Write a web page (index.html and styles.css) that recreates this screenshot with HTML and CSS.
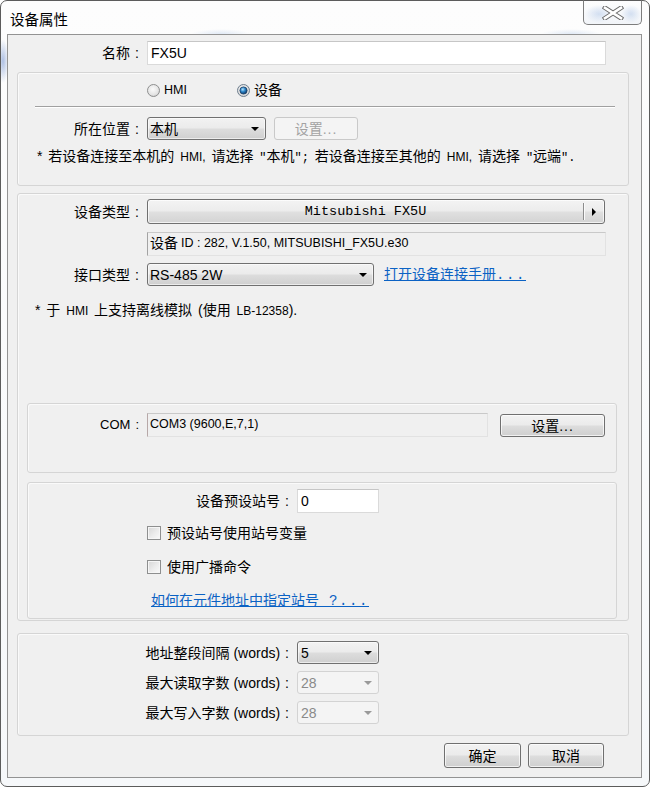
FILE: index.html
```html
<!DOCTYPE html>
<html>
<head>
<meta charset="utf-8">
<title>设备属性</title>
<link rel="stylesheet" href="styles.css">
</head>
<body>
<div class="window">
  <div class="titlebar">
    <span class="title">设备属性</span>
    <div class="close">
      <svg width="22" height="14" viewBox="0 0 22 14">
        <path d="M3 1.8 L19 12.2 M19 1.8 L3 12.2" stroke="#6b6b6b" stroke-width="4.6" stroke-linecap="square" fill="none"/>
        <path d="M3 1.8 L19 12.2 M19 1.8 L3 12.2" stroke="#ffffff" stroke-width="2.6" stroke-linecap="square" fill="none"/>
      </svg>
    </div>
  </div>

  <div class="content">
    <div class="row name-row">
      <div class="lbl lw-139">名称<span class="colon">:</span></div>
      <div class="edit name-edit">FX5U</div>
    </div>

    <div class="group g1">
      <div class="radios">
        <span class="radio">
          <svg width="13" height="13" viewBox="0 0 13 13">
            <defs>
              <radialGradient id="ru" cx="45%" cy="40%" r="65%">
                <stop offset="0" stop-color="#fbfbfb"/>
                <stop offset="0.7" stop-color="#e4e4e4"/>
                <stop offset="1" stop-color="#c6c6c6"/>
              </radialGradient>
            </defs>
            <circle cx="6.5" cy="6.5" r="6" fill="url(#ru)" stroke="#8e8f8f"/>
          </svg>
          <span class="rtext rsm">HMI</span>
        </span>
        <span class="radio r2">
          <svg width="13" height="13" viewBox="0 0 13 13">
            <defs>
              <radialGradient id="rs" cx="45%" cy="40%" r="65%">
                <stop offset="0" stop-color="#fbfbfb"/>
                <stop offset="1" stop-color="#cfcfcf"/>
              </radialGradient>
              <radialGradient id="rd" cx="40%" cy="35%" r="70%">
                <stop offset="0" stop-color="#b8e6ff"/>
                <stop offset="0.45" stop-color="#2c86c9"/>
                <stop offset="1" stop-color="#0b2f5e"/>
              </radialGradient>
            </defs>
            <circle cx="6.5" cy="6.5" r="6" fill="url(#rs)" stroke="#6f7f8f"/>
            <circle cx="6.5" cy="6.5" r="3.6" fill="url(#rd)" stroke="#1b3f66" stroke-width="0.8"/>
          </svg>
          <span class="rtext">设备</span>
        </span>
      </div>
      <div class="sep"></div>
      <div class="row loc-row">
        <div class="lbl lw-129">所在位置<span class="colon">:</span></div>
        <div class="combo loc-combo"><span class="ctext">本机</span><i class="arrow"></i></div>
        <div class="btn disabled loc-btn">设置<span class="bdots">...</span></div>
      </div>
      <p class="note note1">* 若设备连接至本机的 <span class="sm">HMI,</span> 请选择 <span class="q">"</span>本机<span class="q">";</span> 若设备连接至其他的 <span class="sm">HMI,</span> 请选择 <span class="q">"</span>远端<span class="q">".</span></p>
    </div>

    <div class="group g2">
      <div class="row dev-row">
        <div class="lbl lw-129">设备类型<span class="colon">:</span></div>
        <div class="devbtn">
          <span class="devtext">Mitsubishi FX5U</span>
          <span class="split"></span>
          <span class="tri-wrap"><i class="tri"></i></span>
        </div>
      </div>
      <div class="row id-row">
        <div class="static id-field">设备 <span class="lat">ID : 282, V.1.50, MITSUBISHI_FX5U.e30</span></div>
      </div>
      <div class="row if-row">
        <div class="lbl lw-129">接口类型<span class="colon">:</span></div>
        <div class="combo if-combo"><span class="ctext">RS-485 2W</span><i class="arrow"></i></div>
        <a class="link man-link">打开设备连接手册<span class="ldots">...</span></a>
      </div>
      <p class="note note2">* 于 <span class="sm">HMI</span> 上支持离线模拟 (使用 <span class="sm">LB-12358</span>).</p>

      <div class="group sub com-box">
        <div class="row com-row">
          <div class="lbl lw-119 com-lbl">COM<span class="colon">:</span></div>
          <div class="static com-field"><span class="lat">COM3 (9600,E,7,1)</span></div>
          <div class="btn com-btn">设置<span class="bdots">...</span></div>
        </div>
      </div>

      <div class="group sub st-box">
        <div class="row st-row">
          <div class="lbl lw-269">设备预设站号<span class="colon">:</span></div>
          <div class="edit st-edit">0</div>
        </div>
        <div class="row chk-row chk1">
          <span class="chk"></span><span class="chk-text">预设站号使用站号变量</span>
        </div>
        <div class="row chk-row chk2">
          <span class="chk"></span><span class="chk-text">使用广播命令</span>
        </div>
        <div class="row link-row">
          <a class="link">如何在元件地址中指定站号<span class="ldots"> ?...</span></a>
        </div>
      </div>
    </div>

    <div class="group g3">
      <div class="row g3-row">
        <div class="lbl lw-279">地址整段间隔 (words)<span class="colon">:</span></div>
        <div class="combo small-combo"><span class="ctext">5</span><i class="arrow"></i></div>
      </div>
      <div class="row g3-row">
        <div class="lbl lw-279">最大读取字数 (words)<span class="colon">:</span></div>
        <div class="combo small-combo disabled"><span class="ctext">28</span><i class="arrow"></i></div>
      </div>
      <div class="row g3-row">
        <div class="lbl lw-279">最大写入字数 (words)<span class="colon">:</span></div>
        <div class="combo small-combo disabled"><span class="ctext">28</span><i class="arrow"></i></div>
      </div>
    </div>

    <div class="actions">
      <div class="btn act-btn">确定</div>
      <div class="btn act-btn cancel">取消</div>
    </div>
  </div>
</div>
</body>
</html>
```

FILE: styles.css
```css
html, body {
  margin: 0;
  padding: 0;
  background: #ffffff;
}

body {
  font-family: "Liberation Sans", "Noto Sans CJK SC", sans-serif;
  font-size: 14px;
  color: #000000;
}

.window {
  width: 650px;
  height: 787px;
  box-sizing: border-box;
  border: 1px solid #5c5c5c;
  border-radius: 7px;
  padding: 0 7px 8px 6px;
  display: flex;
  flex-direction: column;
  background:
    radial-gradient(ellipse 14px 9px at 598px 13px, rgba(150, 180, 225, 0.55), rgba(150, 180, 225, 0) 100%),
    radial-gradient(ellipse 10px 9px at 630px 13px, rgba(150, 180, 225, 0.55), rgba(150, 180, 225, 0) 100%),
    radial-gradient(ellipse 6px 22px at 2px 60px, rgba(120, 150, 210, 0.6), rgba(120, 150, 210, 0) 100%),
    radial-gradient(ellipse 30px 5px at 220px 33px, rgba(170, 195, 230, 0.35), rgba(170, 195, 230, 0) 100%),
    radial-gradient(ellipse 30px 5px at 570px 33px, rgba(170, 195, 230, 0.35), rgba(170, 195, 230, 0) 100%),
    linear-gradient(#fdfdfd, #f6f8fa);
}

/* ---------- title bar ---------- */
.titlebar {
  height: 33px;
  display: flex;
  align-items: flex-start;
  flex: none;
}

.title {
  font-family: "Noto Sans CJK SC", sans-serif;
  font-size: 14.5px;
  line-height: 18px;
  margin: 9px 0 0 3px;
  color: #000;
}

.close {
  margin-left: auto;
  margin-top: -1px;
  width: 59px;
  height: 25px;
  box-sizing: border-box;
  border: 1px solid #7d7d7d;
  border-top-color: #5c5c5c;
  border-radius: 0 0 5px 5px;
  background: linear-gradient(rgba(255,255,255,0.2), rgba(230,236,244,0.5));
  display: flex;
  align-items: center;
  justify-content: center;
}

/* ---------- content panel ---------- */
.content {
  flex: 1;
  box-sizing: border-box;
  border: 1px solid #939393;
  background: #f0f0f0;
  display: flex;
  flex-direction: column;
  align-items: flex-start;
}

.row {
  display: flex;
  align-items: center;
}

.lbl {
  display: flex;
  justify-content: flex-end;
  align-items: center;
  box-sizing: border-box;
  padding-right: 8px;
  white-space: nowrap;
  flex: none;
  line-height: 16px;
}

.colon {
  margin-left: 5px;
}

.lw-139 { width: 139px; }
.lw-129 { width: 129px; }
.lw-119 { width: 119px; }
.lw-269 { width: 269px; }
.lw-279 { width: 279px; }

.sm {
  font-size: 12px;
}

.q {
  font-family: "Liberation Mono", monospace;
  font-size: 12px;
}

.lat {
  font-size: 12.5px;
}

.bdots {
  letter-spacing: 1px;
}

.ldots {
  font-family: "Liberation Mono", monospace;
  letter-spacing: 1.6px;
}

/* ---------- inputs ---------- */
.edit {
  box-sizing: border-box;
  height: 24px;
  background: #ffffff;
  border: 1px solid #dadada;
  border-top-color: #c6c6c6;
  padding: 0 3px;
  display: flex;
  align-items: center;
  line-height: 16px;
}

.name-row {
  margin-top: 6px;
}

.name-edit {
  width: 459px;
}

.static {
  box-sizing: border-box;
  height: 24px;
  background: #f0f0f0;
  border: 1px solid #e2e2e2;
  border-left-color: #a3a3a3;
  border-top-color: #c9c9c9;
  padding: 0 2px;
  display: flex;
  align-items: flex-start;
  padding-top: 2px;
  line-height: 16px;
  white-space: nowrap;
}

.id-field .lat {
  margin-left: 3px;
}

/* ---------- combo boxes ---------- */
.combo {
  box-sizing: border-box;
  height: 23px;
  border: 1px solid #707070;
  border-radius: 3px;
  background: linear-gradient(#f2f2f2 0%, #ebebeb 48%, #dddddd 52%, #cfcfcf 100%);
  box-shadow: inset 0 0 0 1px rgba(255,255,255,0.6);
  display: flex;
  align-items: center;
  padding: 0 6px 0 2px;
  flex: none;
}

.ctext {
  flex: 1;
  line-height: 16px;
  white-space: nowrap;
}

.arrow {
  width: 0;
  height: 0;
  border-left: 4.5px solid transparent;
  border-right: 4.5px solid transparent;
  border-top: 4.5px solid #000;
  margin-top: 1px;
}

.combo.disabled {
  background: #f4f4f4;
  border-color: #d3d3d3;
  box-shadow: none;
  color: #8a8a8a;
}

.combo.disabled .arrow {
  border-top-color: #9a9a9a;
}

/* ---------- buttons ---------- */
.btn {
  box-sizing: border-box;
  height: 23px;
  border: 1px solid #707070;
  border-radius: 3px;
  background: linear-gradient(#f2f2f2 0%, #ebebeb 48%, #dddddd 52%, #cfcfcf 100%);
  box-shadow: inset 0 0 0 1px rgba(255,255,255,0.7);
  display: flex;
  align-items: center;
  justify-content: center;
  line-height: 16px;
  flex: none;
}

.btn.disabled {
  background: #f4f4f4;
  border-color: #c9c9c9;
  box-shadow: none;
  color: #a3a3a3;
}

/* ---------- groups ---------- */
.group {
  box-sizing: border-box;
  border: 1px solid #d5d5d5;
  border-radius: 3px;
  box-shadow: inset 1px 1px 0 #fafafa;
  margin-left: 9px;
  width: 612px;
  display: flex;
  flex-direction: column;
  align-items: flex-start;
  flex: none;
}

.g1 {
  margin-top: 7px;
  height: 114px;
}

.radios {
  margin-top: 9px;
  height: 16px;
  padding-left: 129px;
  display: flex;
  align-items: center;
}

.radio {
  display: flex;
  align-items: center;
  height: 16px;
}

.radio svg {
  display: block;
}

.rtext {
  margin-left: 4px;
  line-height: 16px;
}

.rsm {
  font-size: 12.5px;
}

.r2 {
  margin-left: 50px;
}

.sep {
  margin: 8px 0 0 17px;
  width: 580px;
  height: 1px;
  background: #a0a0a0;
  border-bottom: 1px solid #ffffff;
}

.loc-row {
  margin-top: 9px;
}

.loc-combo {
  width: 119px;
}

.loc-btn {
  width: 84px;
  margin-left: 8px;
}

.note {
  margin: 0;
  line-height: 16px;
  white-space: nowrap;
}

.note1 {
  margin-top: 8px;
  padding-left: 19px;
  word-spacing: 2px;
}

/* ---------- group 2 ---------- */
.g2 {
  margin-top: 7px;
  height: 428px;
}

.dev-row {
  margin-top: 5px;
}

.devbtn {
  box-sizing: border-box;
  width: 458px;
  height: 25px;
  border: 1px solid #707070;
  border-radius: 3px;
  background: linear-gradient(#f3f3f3 0%, #ececec 48%, #e0e0e0 52%, #d3d3d3 100%);
  box-shadow: inset 0 0 0 1px rgba(255,255,255,0.7);
  display: flex;
  align-items: center;
}

.devtext {
  flex: 1;
  text-align: center;
  font-family: "Liberation Mono", monospace;
  font-size: 13.5px;
  line-height: 16px;
  white-space: nowrap;
}

.split {
  width: 1px;
  height: 17px;
  background: #8c8c8c;
  box-shadow: 1px 0 0 #fafafa;
}

.tri-wrap {
  width: 20px;
  display: flex;
  justify-content: center;
}

.tri {
  width: 0;
  height: 0;
  border-top: 4px solid transparent;
  border-bottom: 4px solid transparent;
  border-left: 4px solid #000;
}

.id-row {
  margin-top: 8px;
  padding-left: 129px;
}

.id-field {
  width: 459px;
}

.if-row {
  margin-top: 7px;
}

.if-combo {
  width: 227px;
}

.link {
  color: #0b62c4;
  text-decoration: underline;
  line-height: 16px;
  white-space: nowrap;
  cursor: pointer;
}

.man-link {
  margin-left: 10px;
}

.note2 {
  margin-top: 16px;
  padding-left: 17px;
  word-spacing: 2px;
}

.sub {
  width: 590px;
  margin-left: 9px;
}

.com-box {
  margin-top: 84px;
  height: 70px;
}

.com-row {
  margin-top: 8px;
}

.com-lbl {
  font-size: 13px;
}

.com-field {
  width: 341px;
  border-left-color: #b7a8a8;
}

.com-btn {
  width: 105px;
  margin-left: 12px;
  margin-top: 2px;
}

.st-box {
  margin-top: 9px;
  height: 137px;
}

.st-row {
  margin-top: 6px;
}

.st-edit {
  width: 82px;
}

.chk-row {
  padding-left: 119px;
  height: 16px;
}

.chk1 {
  margin-top: 12px;
}

.chk2 {
  margin-top: 18px;
}

.chk {
  width: 14px;
  height: 14px;
  box-sizing: border-box;
  border: 1px solid #8e8f8f;
  background: linear-gradient(135deg, #d6d6d6 0%, #ececec 55%, #fafafa 100%);
  box-shadow: inset 0 0 0 1px #f6f6f6;
  flex: none;
}

.chk-text {
  margin-left: 6px;
  line-height: 16px;
}

.link-row {
  margin-top: 17px;
  padding-left: 123px;
}

/* ---------- group 3 ---------- */
.g3 {
  margin-top: 12px;
  height: 103px;
}

.g3-row {
  margin-top: 7px;
}

.small-combo {
  width: 82px;
  padding-left: 3px;
}

/* ---------- dialog buttons ---------- */
.actions {
  align-self: stretch;
  margin-top: 7px;
  display: flex;
  justify-content: flex-end;
  padding-right: 37px;
}

.act-btn {
  width: 77px;
  height: 25px;
}

.cancel {
  width: 76px;
  margin-left: 7px;
}
```
